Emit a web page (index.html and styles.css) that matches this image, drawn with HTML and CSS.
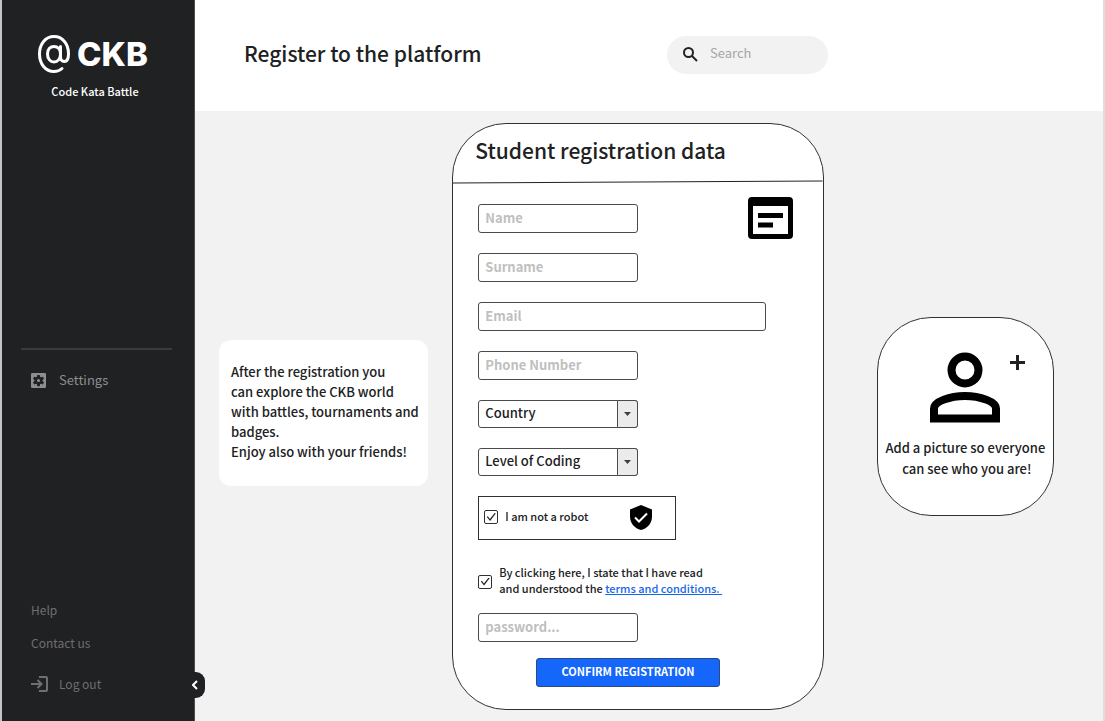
FILE: index.html
```html
<!DOCTYPE html>
<html lang="en">
<head>
<meta charset="utf-8">
<title>Code Kata Battle – Register</title>
<meta name="viewport" content="width=device-width, initial-scale=1">
<link rel="stylesheet" href="styles.css">
</head>
<body>
<div class="app">
  <aside class="sidebar">
    <div class="brand">
      <svg class="brand-icon" viewBox="0 0 34 40" aria-hidden="true"><path d="M25 34.500C22.500 36.800 19.800 37.500 17 37.500C8.500 37.500 2.500 30 2.500 20S8.500 2.500 17 2.500S31.500 10 31.500 19.500C31.500 25 30 27.500 27.300 27.500S23.500 25.500 23.500 22.500V12.500M23.500 20C23.500 25 20.500 28 17 28S10.500 25 10.500 20S13.500 12.500 17 12.500S23.500 15 23.500 20"/></svg>
      <span class="brand-name">CKB</span>
    </div>
    <p class="brand-tag">Code Kata Battle</p>
    <nav class="nav">
      <a class="nav-link settings" href="#">
        <svg class="nav-icon" viewBox="0 0 24 24" aria-hidden="true"><path fill-rule="evenodd" d="M2 0h20a2 2 0 0 1 2 2v20a2 2 0 0 1-2 2H2a2 2 0 0 1-2-2V2a2 2 0 0 1 2-2zm8 3-.5 3-1.500.9-2.900-1.100-2 3.500L5.500 11v2l-2.400 1.800 2 3.500L8 17.200l1.500.9.5 2.900h4l.5-2.900 1.500-.9 2.900 1.100 2-3.500-2.400-1.800v-2l2.400-1.700-2-3.500L16 6.900 14.500 6 14 3zm2 6.500a2.500 2.500 0 1 1 0 5 2.500 2.500 0 0 1 0-5z"/></svg>
        <span>Settings</span>
      </a>
    </nav>
    <nav class="foot-nav">
      <a class="foot-link" href="#">Help</a>
      <a class="foot-link" href="#">Contact us</a>
      <a class="foot-link logout" href="#">
        <svg class="logout-icon" viewBox="0 0 17 16" aria-hidden="true"><path d="M0 8h10.500M6.500 4l4 4-4 4M8 1h7a1 1 0 0 1 1 1v12a1 1 0 0 1-1 1H8"/></svg>
        <span>Log out</span>
      </a>
    </nav>
    <button class="collapse" type="button" aria-label="Collapse sidebar">
      <svg class="collapse-icon" viewBox="0 0 6 10" aria-hidden="true"><path d="M5 1 1 5l4 4"/></svg>
    </button>
  </aside>
  <div class="main">
    <header class="topbar">
      <h1 class="title">Register to the platform</h1>
      <label class="search">
        <svg class="search-icon" viewBox="0 0 15 15" aria-hidden="true"><circle cx="5.500" cy="5.500" r="4.500"/><path d="m9 9 5 5"/></svg>
        <input class="search-input" type="search" placeholder="Search" aria-label="Search">
      </label>
    </header>
    <main class="content">
      <section class="note">
        <p>After the registration you<br>can explore the CKB world<br>with battles, tournaments and<br>badges.<br>Enjoy also with your friends!</p>
      </section>
      <form class="panel">
        <h2 class="panel-title">Student registration data</h2>
        <svg class="rule" viewBox="0 0 370 4" preserveAspectRatio="none" aria-hidden="true"><path d="M0 3 370 1"/></svg>
        <div class="fields">
          <svg class="form-icon" viewBox="0 0 45 42" aria-hidden="true"><path fill-rule="evenodd" d="M4 0h37a4 4 0 0 1 4 4v34a4 4 0 0 1-4 4H4a4 4 0 0 1-4-4V4a4 4 0 0 1 4-4zm1 9v28h35V9zm5 7h25v5H10zm0 9.500h15v5H10z"/></svg>
          <input class="field" type="text" placeholder="Name" aria-label="Name">
          <input class="field" type="text" placeholder="Surname" aria-label="Surname">
          <input class="field wide" type="email" placeholder="Email" aria-label="Email">
          <input class="field" type="tel" placeholder="Phone Number" aria-label="Phone Number">
          <div class="select-box">
            <select class="field select" aria-label="Country"><option>Country</option></select>
            <span class="arrow"><svg class="arrow-icon" viewBox="0 0 7 4" aria-hidden="true"><path d="M0 0h7L3.500 4z"/></svg></span>
          </div>
          <div class="select-box">
            <select class="field select" aria-label="Level of Coding"><option>Level of Coding</option></select>
            <span class="arrow"><svg class="arrow-icon" viewBox="0 0 7 4" aria-hidden="true"><path d="M0 0h7L3.500 4z"/></svg></span>
          </div>
          <div class="robot">
            <label class="check-label"><input class="check" type="checkbox" checked><span>I am not a robot</span></label>
            <svg class="shield" viewBox="0 0 22 25" aria-hidden="true"><path d="M11 0 22 4.500v7C22 18 17.500 23.500 11 25 4.500 23.500 0 18 0 11.500v-7z"/><path class="shield-tick" d="m5 12.500 4 4 8-8"/></svg>
          </div>
          <div class="terms">
            <input class="check" id="terms" type="checkbox" checked>
            <label for="terms">By clicking here, I state that I have read<br>and understood the <a class="terms-link" href="#">terms and conditions.&nbsp;</a></label>
          </div>
          <input class="field" type="password" placeholder="password..." aria-label="Password">
        </div>
        <button class="submit" type="submit">CONFIRM REGISTRATION</button>
      </form>
      <button class="picture" type="button">
        <span class="picture-art">
          <svg class="person" viewBox="0 0 70 70" aria-hidden="true"><circle cx="35" cy="17.500" r="13.500"/><path d="M4 66V56C4 49 20 43.500 35 43.500S66 49 66 56v10z"/></svg>
          <svg class="plus" viewBox="0 0 15 15" aria-hidden="true"><path d="M7.500 0v15M0 7.500h15"/></svg>
        </span>
        <span>Add a picture so everyone<br>&nbsp;can see who you are!</span>
      </button>
    </main>
  </div>
</div>
</body>
</html>
```
FILE: styles.css
```css
* { box-sizing: border-box; }
body {
  margin: 0;
  background: #f2f2f2;
  color: #202122;
  font-family: "Noto Sans CJK SC", "Noto Sans", sans-serif;
  font-size: 13px;
  font-weight: 500;
  line-height: 20px;
}
h1, h2, p { margin: 0; font-weight: inherit; }
a { color: inherit; text-decoration: none; }
button, input, select { font: inherit; color: inherit; }
svg { display: block; flex: none; fill: none; }

.app {
  display: flex;
  min-height: 100vh;
  border-left: 2px solid #c4c5c5;
  border-right: 2px solid #dedede;
}

.sidebar {
  position: relative;
  display: flex;
  flex-direction: column;
  flex: 0 0 193px;
  padding: 33px 22px 28px 19px;
  background: #202123;
  color: #fff;
  border-right: 1px solid #4c4d4e;
}
.brand { display: flex; align-items: center; gap: 6px; padding-left: 16px; }
.brand-icon { width: 34px; height: 42px; stroke: #fff; stroke-width: 3; stroke-linecap: round; }
.brand-name { font-family: Inter, sans-serif; font-size: 33px; font-weight: 800; line-height: 40px; }
.brand-tag { margin-top: 6px; padding-right: 3px; text-align: center; font-size: 11px; }
.nav { margin-top: 247px; padding: 20px 10px 0; border-top: 2px solid #3a3b3d; color: #8d8e8f; font-weight: 400; }
.nav-link, .logout { display: flex; align-items: center; gap: 13px; }
.nav-icon { width: 15px; height: 15px; fill: #8d8e8f; }
.foot-nav { display: flex; flex-direction: column; gap: 13px; margin-top: auto; padding-left: 10px; color: #6e6f70; font-size: 12px; font-weight: 400; }
.logout { margin-top: 8px; gap: 11px; }
.logout-icon { width: 17px; height: 16px; stroke: #6e6f70; stroke-width: 2; }
.collapse {
  position: absolute;
  right: -11px;
  bottom: 24px;
  display: flex;
  align-items: center;
  justify-content: center;
  width: 20px;
  height: 26px;
  padding: 0;
  border: 0;
  border-radius: 9px;
  background: #202123;
}
.collapse-icon { width: 6px; height: 10px; stroke: #fff; stroke-width: 2; }

.main { flex: 1; min-width: 0; display: flex; flex-direction: column; }
.topbar { display: flex; align-items: center; min-height: 111px; padding: 0 275px 2px 49px; background: #fff; }
.title { flex: 1; padding-bottom: 4px; font-size: 21px; line-height: 32px; white-space: nowrap; }
.search { display: flex; align-items: center; gap: 12px; width: 161px; height: 38px; padding: 0 16px; border-radius: 19px; background: #f2f2f2; }
.search-icon { width: 15px; height: 15px; stroke: #202122; stroke-width: 2; }
.search-input { flex: 1; min-width: 0; padding: 0 0 3px; border: 0; outline: 0; background: none; font-weight: 400; }
.search-input::placeholder { color: #a6a6a6; opacity: 1; }

.content {
  flex: 1;
  display: grid;
  grid-template-columns: minmax(0, 209fr) minmax(0, 371fr) minmax(0, 206fr);
  gap: 24px;
  align-items: center;
  padding: 12px 49px 12px 24px;
}
.note { margin-bottom: 8px; padding: 22px 12px 24px; border-radius: 12px; background: #fff; white-space: nowrap; }

.panel {
  display: flex;
  flex-direction: column;
  overflow: hidden;
  padding-bottom: 22px;
  border: 1px solid #303132;
  border-radius: 54px;
  background: #fff;
}
.panel-title { padding: 10px 22px 14px; font-size: 21px; line-height: 32px; white-space: nowrap; }
.rule { width: 100%; height: 4px; stroke: #202122; stroke-width: 1; }
.fields {
  position: relative;
  display: flex;
  flex-direction: column;
  align-items: flex-start;
  gap: 20px;
  padding: 20px 25px 0;
}
.form-icon { position: absolute; top: 13px; right: 30px; width: 45px; height: 42px; fill: #000; }
.field {
  width: 160px;
  height: 29px;
  padding: 0 6px 2px;
  border: 1px solid #4a4b4c;
  border-radius: 3px;
  background: #fff;
}
.field::placeholder { color: #bfbfbf; opacity: 1; font-weight: 700; }
.wide { width: 90%; }
.select-box { position: relative; width: 160px; height: 28px; }
.select { appearance: none; height: 100%; padding-bottom: 3px; }
.arrow {
  position: absolute;
  inset: 0 0 0 auto;
  display: flex;
  align-items: center;
  justify-content: center;
  width: 21px;
  border: 1px solid #4a4b4c;
  border-radius: 0 3px 3px 0;
  background: #ebebeb;
  pointer-events: none;
}
.arrow-icon { width: 7px; height: 4px; fill: #404142; }
.robot {
  display: flex;
  align-items: center;
  justify-content: space-between;
  width: 198px;
  height: 44px;
  padding: 0 23px 2px 5px;
  border: 1px solid #303132;
  font-size: 11px;
}
.robot span { padding-bottom: 2px; }
.check-label, .terms { display: flex; align-items: center; gap: 7px; }
.check {
  appearance: none;
  flex: none;
  display: grid;
  place-content: center;
  width: 14px;
  height: 14px;
  margin: 0;
  border: 1px solid #303132;
  border-radius: 2px;
  background: #fff;
}
.check:checked::before {
  content: "";
  width: 9px;
  height: 8px;
  background: #202122;
  clip-path: polygon(0 50%, 12% 42%, 35% 76%, 88% 0, 100% 6%, 37% 100%);
}
.shield { width: 22px; height: 25px; fill: #000; }
.shield-tick { fill: none; stroke: #fff; stroke-width: 2; }
.terms { margin: 4px 0 -3px; font-size: 11px; line-height: 16px; white-space: nowrap; }
.terms .check { margin-top: 3px; }
.terms-link { color: #1766e8; text-decoration: underline; }
.submit {
  align-self: center;
  width: 184px;
  height: 29px;
  margin: 16px 20px 0 0;
  padding: 0 0 3px;
  border: 1px solid #2c4a80;
  border-radius: 3px;
  background: #1467fa;
  color: #fff;
  font-size: 11px;
  font-weight: 700;
}

.picture {
  margin-left: 29px;
  padding: 34px 0 36px;
  border: 1px solid #303132;
  border-radius: 54px;
  background: #fff;
  line-height: 21px;
  white-space: nowrap;
  overflow: hidden;
}
.picture-art { position: relative; display: flex; justify-content: center; margin-bottom: 14px; }
.person { width: 70px; height: 71px; stroke: #000; stroke-width: 8; }
.plus { position: absolute; top: 3px; right: 28px; width: 15px; height: 15px; stroke: #202122; stroke-width: 3; }
```
